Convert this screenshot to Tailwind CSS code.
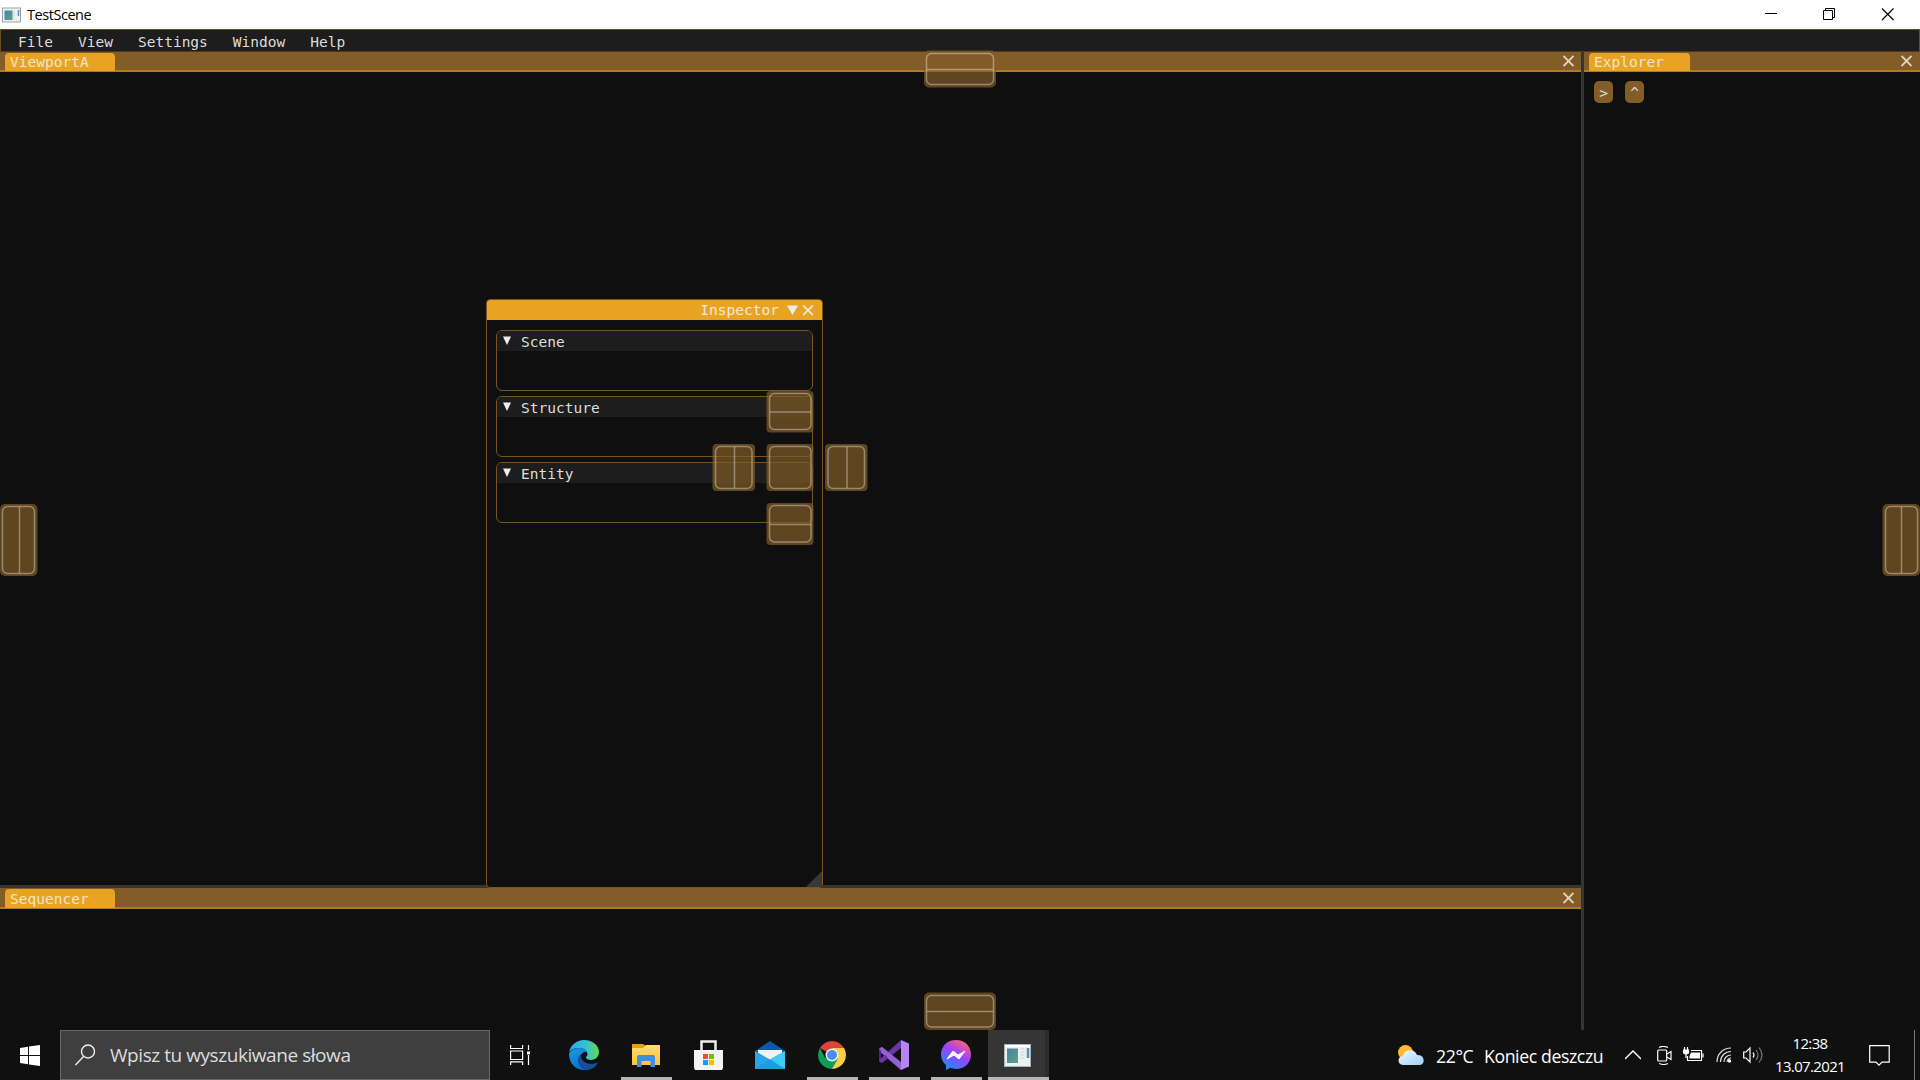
<!DOCTYPE html>
<html lang="pl">
<head>
<meta charset="utf-8">
<title>TestScene</title>
<script src="https://cdn.jsdelivr.net/npm/@tailwindcss/browser@4"></script>
</head>
<body class="relative flex h-[1080px] w-[1920px] flex-col overflow-hidden bg-[#0f0f0f] font-['Open_Sans',sans-serif]">

<!-- Window title bar -->
<header class="flex h-[29px] shrink-0 items-center bg-white text-black">
  <svg class="ml-[2px] h-4 w-[19px]" viewBox="0 0 19 16"><defs><linearGradient id="app" x1="0" y1="0" x2="1" y2="1"><stop stop-color="#4a7fae"/><stop offset="1" stop-color="#5aa777"/></linearGradient></defs><rect x=".5" y="1" width="18" height="14" fill="#eef0f2" stroke="#9aa3ad"/><rect x="2.5" y="3.500" width="8" height="9.500" fill="url(#app)"/><path d="M12 4v9" stroke="#d4d8dc"/><path d="M16.500 3v6" stroke="#5a93a8" stroke-width="1.500"/></svg>
  <span class="ml-[6px] text-[14.500px] leading-[29px] tracking-[-0.45px]">TestScene</span>
  <div class="ml-auto flex items-center">
    <svg class="h-[29px] w-[58px]" viewBox="0 0 58 29" fill="none" stroke="#000"><path d="M22 13.500h12"/></svg>
    <svg class="h-[29px] w-[58px]" viewBox="0 0 58 29" fill="none" stroke="#000"><path d="M22.500 10.500h9v9h-9zM24.500 10.500v-2h9v9h-2"/></svg>
    <svg class="mr-[3px] h-[29px] w-[58px]" viewBox="0 0 58 29" fill="none" stroke="#000" stroke-width="1.200"><path d="M23 8.500l11.500 11.500M34.500 8.500L23 20"/></svg>
  </div>
</header>

<!-- Application -->
<main class="flex h-[1001px] shrink-0 flex-col font-['DejaVu_Sans_Mono',monospace] text-[14.530px] text-[#dcdcdc]">
  <nav class="flex h-[23px] shrink-0 items-center gap-[25px] border border-[#6b4d20] border-b-[#4d3b20] bg-[#1d1d1d] pt-[4px] pl-[17px] leading-[17px]">
    <span>File</span><span>View</span><span>Settings</span><span>Window</span><span>Help</span>
  </nav>
  <div class="flex min-h-0 flex-1">
    <div class="flex w-[1581px] flex-col">
      <section class="flex h-[833px] flex-col">
        <div class="flex h-5 items-end justify-between border-b-2 border-[#b67a1c] bg-[#825d27] pl-[5px]">
          <div class="-mb-px h-[18px] w-[110px] rounded-t-[4px] bg-[#e8a323] pl-[5px] leading-[18px] text-[#f0e3c8]">ViewportA</div>
          <svg class="mr-[7px] h-[18px] w-[11px]" viewBox="0 0 11 18" stroke="#e0d4c2" stroke-width="1.800"><path d="M.5 4l10 10M10.500 4l-10 10"/></svg>
        </div>
      </section>
      <div class="h-[3px] bg-[#353535]"></div>
      <section class="flex flex-1 flex-col">
        <div class="flex h-[21px] items-end justify-between border-b-2 border-[#b67a1c] bg-[#825d27] pl-[5px]">
          <div class="-mb-px h-[19px] w-[110px] rounded-t-[4px] bg-[#e8a323] pl-[5px] leading-[20px] text-[#f0e3c8]">Sequencer</div>
          <svg class="mr-[7px] h-[18px] w-[11px]" viewBox="0 0 11 18" stroke="#e0d4c2" stroke-width="1.800"><path d="M.5 4l10 10M10.500 4l-10 10"/></svg>
        </div>
      </section>
    </div>
    <div class="w-[3px] bg-[#353535]"></div>
    <section class="flex flex-1 flex-col">
      <div class="flex h-5 items-end justify-between border-b-2 border-[#b67a1c] bg-[#825d27] pl-[5px]">
        <div class="-mb-px h-[18px] w-[101px] rounded-t-[4px] bg-[#e8a323] pl-[5px] leading-[18px] text-[#f0e3c8]">Explorer</div>
        <svg class="mr-2 h-[18px] w-[11px]" viewBox="0 0 11 18" stroke="#e0d4c2" stroke-width="1.800"><path d="M.5 4l10 10M10.500 4l-10 10"/></svg>
      </div>
      <div class="flex gap-3 pt-[9px] pl-[10px] leading-[24px]">
        <button class="h-[22px] w-[19px] rounded-[5px] bg-[#825d27]">&gt;</button>
        <button class="h-[22px] w-[19px] rounded-[5px] bg-[#825d27]">^</button>
      </div>
    </section>
  </div>
</main>

<!-- Floating inspector window -->
<aside class="absolute top-[299px] left-[486px] flex h-[589px] w-[337px] flex-col rounded-[4px] border border-[#7a5524] bg-[#0f0f0f] font-['DejaVu_Sans_Mono',monospace] text-[14.530px] text-[#dedede]">
  <div class="flex h-[20px] items-center justify-end rounded-t-[3px] bg-[#e8a323] leading-[21px]">
    <span class="text-[#f3e8d2]">Inspector</span>
    <svg class="ml-[8px] h-[21px] w-[11px]" viewBox="0 0 11 21"><path d="M0 5.500h11l-5.500 9.500z" fill="#eee"/></svg>
    <svg class="mr-[9px] ml-[5px] h-[21px] w-[10px]" viewBox="0 0 10 21" stroke="#eee2cc" stroke-width="1.800"><path d="M0 5.500l10 9.500M10 5.500L0 15"/></svg>
  </div>
  <div class="flex flex-col gap-[5px] px-[9px] pt-[10px]">
    <div class="h-[61px] rounded-[6px] border border-[#7a5524]"><div class="flex h-[20px] items-center rounded-t-[5px] bg-[#1d1d1d] leading-[20px]"><svg class="mr-[10px] ml-[6px] h-5 w-[8px]" viewBox="0 0 8 20"><path d="M0 5.500h8l-4 8.500z" fill="#eee"/></svg><span class="pt-[2px]">Scene</span></div></div>
    <div class="h-[61px] rounded-[6px] border border-[#7a5524]"><div class="flex h-[20px] items-center rounded-t-[5px] bg-[#1d1d1d] leading-[20px]"><svg class="mr-[10px] ml-[6px] h-5 w-[8px]" viewBox="0 0 8 20"><path d="M0 5.500h8l-4 8.500z" fill="#eee"/></svg><span class="pt-[2px]">Structure</span></div></div>
    <div class="h-[61px] rounded-[6px] border border-[#7a5524]"><div class="flex h-[20px] items-center rounded-t-[5px] bg-[#1d1d1d] leading-[20px]"><svg class="mr-[10px] ml-[6px] h-5 w-[8px]" viewBox="0 0 8 20"><path d="M0 5.500h8l-4 8.500z" fill="#eee"/></svg><span class="pt-[2px]">Entity</span></div></div>
  </div>
  <svg class="mt-auto ml-auto h-4 w-4" viewBox="0 0 16 16"><path d="M16 0v16H0z" fill="#393939"/></svg>
</aside>

<!-- Docking targets -->
<svg class="absolute top-0 left-0 h-[1030px] w-[1920px]" viewBox="0 0 1920 1030">
  <g fill="#825d27" fill-opacity=".7">
    <rect x="924" y="50.500" width="72" height="37" rx="5"/><rect x="924" y="992.500" width="72" height="37.500" rx="5"/>
    <rect x="0" y="504" width="37.500" height="72" rx="5"/><rect x="1882.500" y="504" width="37.500" height="72" rx="5"/>
    <rect x="766.500" y="391" width="47" height="41.500" rx="4"/><rect x="766.500" y="444" width="47" height="47" rx="4"/><rect x="766.500" y="503" width="47" height="42" rx="4"/>
    <rect x="712.500" y="444" width="42.500" height="47" rx="4"/><rect x="825" y="444" width="42.500" height="47" rx="4"/>
  </g>
  <g fill="none" stroke="#fff" stroke-opacity=".36" stroke-width="1.500">
    <rect x="926.500" y="53.500" width="67" height="31" rx="5"/><path d="M927 69.500h66"/>
    <rect x="926.500" y="995.500" width="67" height="31.500" rx="5"/><path d="M927 1011.500h66"/>
    <rect x="2.500" y="506.500" width="32" height="67" rx="5"/><path d="M19.500 507v66"/>
    <rect x="1885.500" y="506.500" width="32" height="67" rx="5"/><path d="M1901.500 507v66"/>
    <rect x="769.500" y="393.500" width="41.500" height="36" rx="5"/><path d="M770 412h41"/>
    <rect x="769.500" y="446.500" width="41.500" height="42" rx="5"/>
    <rect x="769.500" y="505.500" width="41.500" height="36.500" rx="5"/><path d="M770 524.500h41"/>
    <rect x="715.500" y="446.500" width="36.500" height="42" rx="5"/><path d="M734.500 447v41"/>
    <rect x="828" y="446.500" width="36.500" height="42" rx="5"/><path d="M847 447v41"/>
  </g>
</svg>

<!-- Taskbar -->
<footer class="flex h-[50px] shrink-0 bg-[#101010] text-white">
  <div class="flex w-[60px] items-center justify-center"><svg class="h-[21px] w-5" viewBox="0 0 20 21" fill="#fff"><path d="M0 3l8-1.200V10H0zM9 1.600L20 0v10H9zM0 11h8v8.200L0 18zM9 11h11v10L9 19.400z"/></svg></div>
  <div class="flex w-[430px] items-center border border-[#686868] bg-[#3f3f3f] pl-[14px] text-[#dcdcdc]">
    <svg class="h-[22px] w-5" viewBox="0 0 20 22" fill="none" stroke="#eee" stroke-width="1.400"><circle cx="13" cy="7.500" r="6.500"/><path d="M8.500 12.500L.5 21"/></svg>
    <span class="ml-[15px] text-[19px] tracking-[-0.440px] whitespace-nowrap">Wpisz tu wyszukiwane słowa</span>
  </div>
  <div class="flex w-[63px] items-center justify-center pr-[3px]"><svg class="h-5 w-5" viewBox="0 0 20 20" fill="none" stroke="#fff" stroke-width="1.200"><path d="M.6 0v3.500h12V0M.6 6h12v8.500H.6zM.6 20v-3.200h12V20M18.500 0v5M18.500 10v10"/><path d="M17 6.500h3v3h-3z" fill="#fff" stroke="none"/></svg></div>

  <div class="flex w-[62px] items-center justify-center">
    <svg class="h-[30px] w-[30px]" viewBox="0 0 30 30"><defs><linearGradient id="e1"><stop stop-color="#2baae8"/><stop offset=".55" stop-color="#2fc2d8"/><stop offset="1" stop-color="#65d94c"/></linearGradient><linearGradient id="e2" x1="0" y1="0" x2=".5" y2="1"><stop stop-color="#1d9de0"/><stop offset="1" stop-color="#0a6fd0"/></linearGradient></defs><path d="M0 13C1 5 8 0 15 0c9 0 15 6 15 12 0 5-4 8-8 8-3 0-5-1-5-2.500 0-1 1.500-1.500 1.500-3.500C18 10 14 8 10 8 5 8 1 10 0 13z" fill="url(#e1)"/><path d="M0 14c1-3 5-6 10-6 4 0 7 2 8 4-3-1-7 2-7 7 0 5 4 9 8 10.400C9 32 0 25 0 14z" fill="url(#e2)"/><path d="M12 14c-5 4-4 13 4 16 5 .5 10-2 12.500-6.500.4-.8-.2-1.200-1-.8C20 26 11 22 12 14z" fill="#12509b"/></svg>
  </div>
  <div class="relative flex w-[62px] items-center justify-center">
    <svg class="h-[24px] w-[28px]" viewBox="0 0 28 24"><defs><linearGradient id="fo" x1="0" y1="0" x2="0" y2="1"><stop stop-color="#ffdc73"/><stop offset="1" stop-color="#f9c43c"/></linearGradient></defs><path d="M0 1h11l3 2-2 4H0z" fill="#e5a10f"/><path d="M0 5h11l3-3h14v20H0z" fill="url(#fo)"/><path d="M5 24V14q0-2 2-2h14q2 0 2 2v10h-4.500v-6h-9v6z" fill="#3d91d8"/></svg>
    <i class="absolute bottom-0 h-[3px] w-[51px] bg-[#b8b4b4]"></i>
  </div>
  <div class="flex w-[62px] items-center justify-center">
    <svg class="h-[30px] w-[29px]" viewBox="0 0 29 30"><path d="M7.500 11V1.500h14V11" fill="none" stroke="#eee" stroke-width="2.500"/><path d="M0 10h29v18l-1 2H1l-1-2z" fill="#f3f3f3"/><path d="M9 14h5v5H9z" fill="#f25022"/><path d="M15 14h5v5h-5z" fill="#7fba00"/><path d="M9 20h5v5H9z" fill="#00a4ef"/><path d="M15 20h5v5h-5z" fill="#ffb900"/></svg>
  </div>
  <div class="flex w-[62px] items-center justify-center">
    <svg class="h-[28px] w-[30px]" viewBox="0 0 30 28"><path d="M0 10L15 0l15 10v3H0z" fill="#075aa9"/><path d="M3 9h24v8l-12 4-12-4z" fill="#f3f3f3"/><path d="M0 10l15 8.500L30 10v18H0z" fill="#27a5e8"/><path d="M15 18.500L30 10v18z" fill="#40cbf3"/><path d="M0 28h30L15 18.500z" fill="#209bdf"/></svg>
  </div>
  <div class="relative flex w-[62px] items-center justify-center">
    <svg class="h-[28px] w-[28px]" viewBox="0 0 28 28"><path d="M1.900 7A14 14 0 0126.100 7L14 14z" fill="#db4437"/><path d="M26.100 7A14 14 0 0114 28l-1-4 7-13-6-4z" fill="#ffcd40"/><path d="M1.900 7A14 14 0 0014 28l6-10.500-6 2-7-3z" fill="#0f9d58"/><circle cx="14" cy="14" r="6.500" fill="#f1f1f1"/><circle cx="14" cy="14" r="5" fill="#4c8bf5"/></svg>
    <i class="absolute bottom-0 h-[3px] w-[51px] bg-[#b8b4b4]"></i>
  </div>
  <div class="relative flex w-[62px] items-center justify-center">
    <svg class="h-[30px] w-[30px]" viewBox="0 0 30 30"><path d="M0 9l3-2 19 17v6L0 11z" fill="#9260d0"/><path d="M0 9l2-2v16l-2-2z" fill="#52218a"/><path d="M0 20L22 0v8L3 23l-3-2z" fill="#6c35ac"/><path d="M3 7l19 15v8L0 9z" fill="#9460d2"/><path d="M22 0l8 3.500v23L22 30z" fill="#b884f2"/></svg>
    <i class="absolute bottom-0 h-[3px] w-[51px] bg-[#b8b4b4]"></i>
  </div>
  <div class="relative flex w-[62px] items-center justify-center">
    <svg class="h-[30px] w-[30px]" viewBox="0 0 30 30"><defs><linearGradient id="ms" x1=".2" y1="1" x2=".8" y2="0"><stop stop-color="#138fff"/><stop offset=".55" stop-color="#a040fb"/><stop offset="1" stop-color="#ff6670"/></linearGradient></defs><path d="M15 0C6.500 0 0 6 0 14.500c0 4.500 2 8 5 10.500v5l4.500-2.200C11 28.500 13 29 15 29c8.500 0 15-6 15-14.500S23.500 0 15 0z" fill="url(#ms)"/><path d="M6 19l6-8 5 4 7-4-6 8-5-4z" fill="#fff" stroke="#fff" stroke-linejoin="round"/></svg>
    <i class="absolute bottom-0 h-[3px] w-[51px] bg-[#b8b4b4]"></i>
  </div>
  <div class="relative ml-px flex w-[61px] items-center border-r-[4px] border-[#2c2c2c] bg-[#353535] pl-4">
    <svg class="h-[23px] w-[27px]" viewBox="0 0 27 23"><rect x=".5" y=".5" width="26" height="22" fill="#edf0f2" stroke="#aab2ba"/><path d="M1 2h25" stroke="#fff" stroke-width="2"/><rect x="3" y="4.500" width="11" height="14.500" fill="url(#app)"/><path d="M16.500 5h4M16.500 8h4M16.500 11h4M16.500 14h4" stroke="#d0d4d8"/><path d="M24 4v10" stroke="#5592a5" stroke-width="2.500"/></svg>
    <i class="absolute bottom-0 left-0 h-[3px] w-[61px] bg-[#b8b4b4]"></i>
  </div>

  <div class="ml-auto flex items-center">
    <svg class="h-[21px] w-[26px]" viewBox="0 0 26 21"><defs><linearGradient id="cl" x1="0" y1="0" x2="1" y2="1"><stop stop-color="#f0f8ff"/><stop offset="1" stop-color="#9fd0f5"/></linearGradient></defs><circle cx="7.500" cy="7.500" r="7.500" fill="#fbb932"/><path d="M5 20C-1 20-1 11 5 11c1-7 12-8 14-1 8-1 9 10 2 10z" fill="url(#cl)"/></svg>
    <span class="ml-[12px] w-[38px] pt-[3px] text-[17.700px] tracking-[-0.400px] whitespace-nowrap">22°C</span>
    <span class="ml-[10px] w-[120px] pt-[3px] text-[17.700px] tracking-[-0.400px] whitespace-nowrap">Koniec deszczu</span>
    <svg class="ml-[21px] h-4 w-4" viewBox="0 0 16 16" fill="none" stroke="#fff" stroke-width="1.400"><path d="M0 12l8-8 8 8"/></svg>
    <svg class="ml-[16px] h-[19px] w-[15px]" viewBox="0 0 15 19" fill="none" stroke="#fff" stroke-width="1.200"><rect x=".7" y="4" width="9" height="11" rx="1"/><path d="M10 8l4-2.500v8L10 11M2 1.500Q6-.5 11 1.500M2 17.500q5 2 9 0"/></svg>
    <svg class="ml-[11px] h-4 w-[21px]" viewBox="0 0 21 16" fill="none" stroke="#fff" stroke-width="1.200"><path d="M8 3.500h10.500v10H4.500V9M20 6.500v4M1.500 0v3M4.500 0v3M3 7v4"/><path d="M.5 3h5v3q-2.500 2-5 0z" fill="#fff"/><path d="M8 5.500h9v6H6.500V9z" fill="#fff" stroke="none"/></svg>
    <svg class="ml-[12px] h-4 w-[17px]" viewBox="0 0 17 16" fill="none" stroke="#ddd" stroke-width="1.200"><path d="M1 15C1 7 7 1 15 1M4.500 15C4.500 9 9 4.500 15 4.500M8 15c0-4 3-7 7-7M11 15c0-2 2-4 4-4"/><circle cx="13.500" cy="14" r="1.700" fill="#fff" stroke="none"/></svg>
    <svg class="ml-[10px] h-[18px] w-[21px]" viewBox="0 0 21 18" fill="none" stroke="#fff" stroke-width="1.200"><path d="M.7 6H3l4-4v14l-4-4H.7z"/><path d="M10 6.500q2 2.500 0 5"/><path d="M13 4q4 5 0 10M16 1.500q6 7.500 0 15" stroke="#777"/></svg>
    <div class="ml-[11px] flex w-[70px] flex-col items-center text-[15px] leading-[23px] tracking-[-0.650px]"><span>12:38</span><span>13.07.2021</span></div>
    <svg class="ml-[24px] h-[21px] w-[21px]" viewBox="0 0 21 21" fill="none" stroke="#fff" stroke-width="1.200"><path d="M.7.700h19.500v16.500H13l-3 3-3-3H.7z"/></svg>
    <div class="ml-[24px] h-[50px] w-[6px] border-l border-[#777]"></div>
  </div>
</footer>
</body>
</html>
